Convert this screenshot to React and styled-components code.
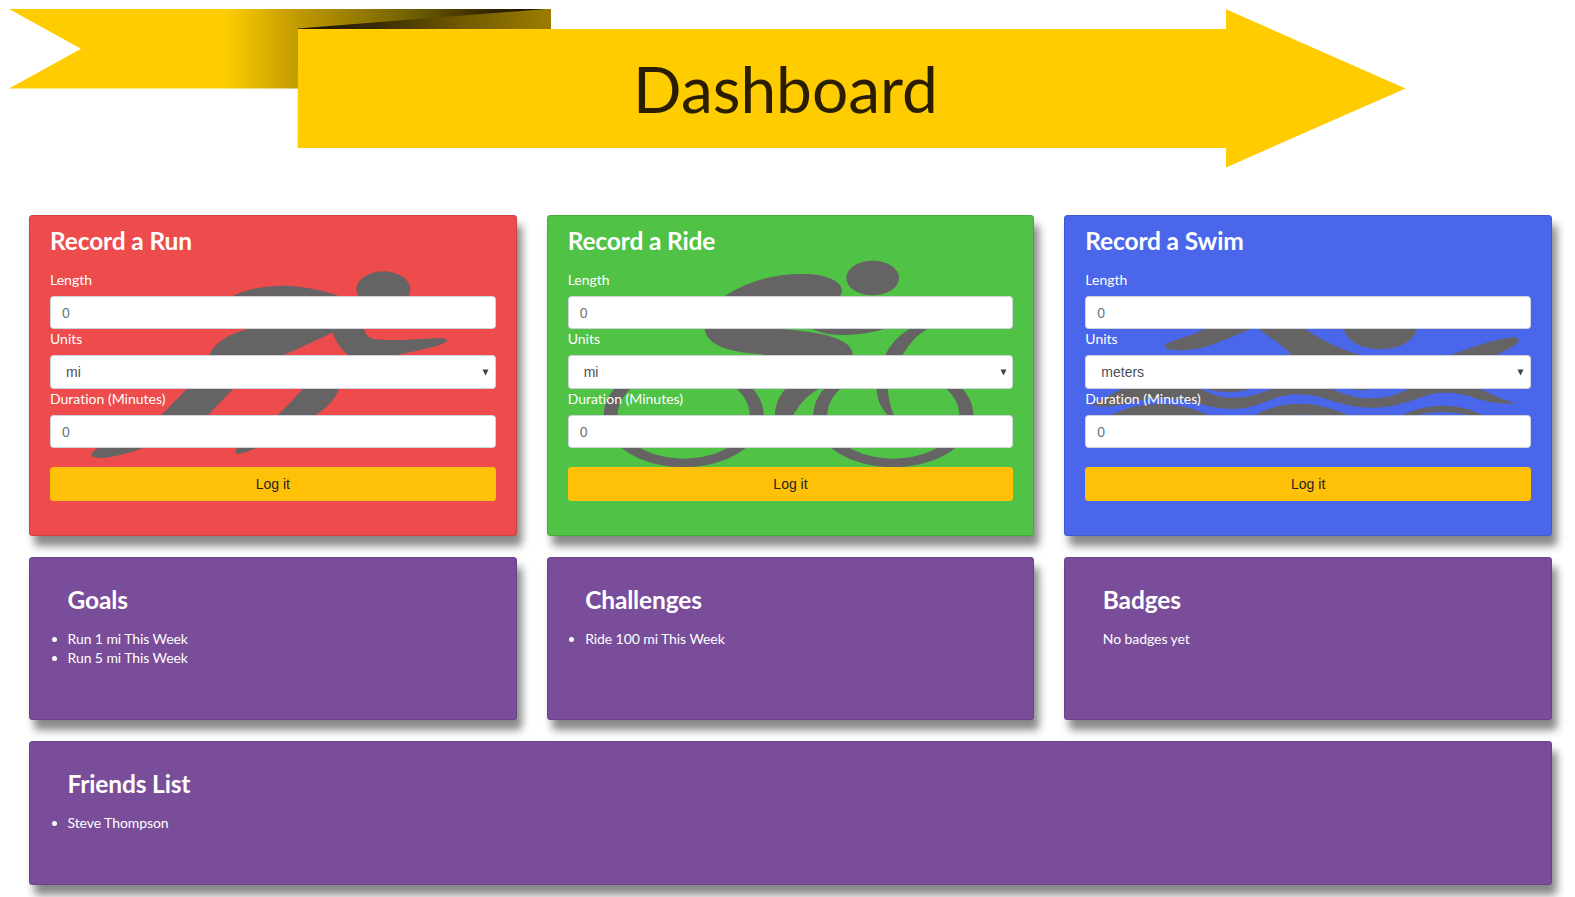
import React from "react";
import styled, { createGlobalStyle } from "styled-components";

const GlobalStyle = createGlobalStyle`
  *, *::before, *::after { box-sizing: border-box; }
  html { font-size: 14px; }
  body {
    margin: 0;
    background: #fff;
    font-family: Lato, "Liberation Sans", sans-serif;
    font-size: 14px;
    line-height: 19px;
    font-variant-ligatures: none;
    color: #fff;
    overflow: hidden;
  }
`;

const Page = styled.div`
  display: flex;
  flex-direction: column;
  height: 897px;
  overflow: hidden;
`;

const Banner = styled.header`
  display: grid;
  height: 215px;
  flex: none;
  > * { grid-area: 1 / 1; }
`;

const BannerArt = styled.svg`
  display: block;
  width: 1575px;
  height: 215px;
`;

const Title = styled.h1`
  margin: 0;
  padding: 50px 4px 0 0;
  z-index: 1;
  text-align: center;
  font-size: 64px;
  line-height: 77px;
  font-weight: 400;
  color: #2b1d00;
`;

const Panels = styled.main`
  display: grid;
  grid-template-columns: repeat(3, 1fr);
  grid-template-rows: 321px 163px 144px;
  column-gap: 30px;
  row-gap: 21px;
  padding: 0 23px 0 29px;
`;

const Card = styled.section`
  display: grid;
  min-width: 0;
  background: ${(p) => p.$color};
  border: 1px solid rgba(0, 0, 0, 0.125);
  border-radius: 3.5px;
  box-shadow: 5px 10px 8px #888;
  grid-column: ${(p) => (p.$wide ? "1 / -1" : "auto")};
  > * { grid-area: 1 / 1; min-width: 0; }
`;

const Figure = styled.svg`
  display: block;
  width: calc(100% + 2px);
  height: 321px;
  margin: -1px;
  fill: #656363;
`;

const Form = styled.form`
  z-index: 1;
  display: flex;
  flex-direction: column;
  padding: 9px 20px 0;
`;

const Heading = styled.h2`
  margin: 0;
  font-size: 24.5px;
  line-height: 32px;
  font-weight: 700;
  letter-spacing: -0.15px;
`;

const Label = styled.label`
  height: 26px;
  margin-top: ${(p) => (p.$first ? 13 : 0)}px;
`;

const Input = styled.input`
  height: 33px;
  width: 100%;
  padding: 5px 11px;
  border: 1px solid #ced4da;
  border-radius: 3.5px;
  background: #fff;
  font: 14px/21px "Liberation Sans", Arial, sans-serif;
  &::placeholder { color: #6c757d; opacity: 1; }
`;

const SelectBox = styled.div`
  display: flex;
  align-items: center;
  justify-content: space-between;
  height: 34px;
  padding: 0 5.5px 0 15px;
  border: 1px solid #ced4da;
  border-radius: 3.5px;
  background: #fff;
  color: #495057;
  font: 14px/21px "Liberation Sans", Arial, sans-serif;
`;

const Caret = styled.svg`
  width: 7px;
  height: 7px;
  fill: #3d4247;
`;

const Button = styled.button`
  height: 34px;
  margin-top: 19px;
  padding: 0;
  border: 0;
  border-radius: 3.5px;
  background: #ffc107;
  color: #212529;
  font: 14px/21px "Liberation Sans", Arial, sans-serif;
`;

const InfoBody = styled.div`
  padding: 26px 38px 0 37.5px;
  letter-spacing: -0.08px;
`;

const List = styled.ul`
  margin: 13px 0 0;
  padding: 0;
`;

const Note = styled.p`
  margin: 13px 0 0;
`;

function Ribbon() {
  return (
    <BannerArt viewBox="0 0 1575 215" aria-hidden="true">
      <defs>
        <linearGradient id="tail" gradientUnits="userSpaceOnUse" x1="225" y1="0" x2="535" y2="0">
          <stop offset="0" stopColor="#ffcc00" />
          <stop offset="0.24" stopColor="#bf9900" />
          <stop offset="0.6" stopColor="#706000" />
          <stop offset="0.82" stopColor="#3a2c00" />
          <stop offset="1" stopColor="#1b1200" />
        </linearGradient>
        <linearGradient id="fold" gradientUnits="userSpaceOnUse" x1="298" y1="0" x2="551" y2="0">
          <stop offset="0" stopColor="#1b1200" />
          <stop offset="0.3" stopColor="#382b00" />
          <stop offset="0.65" stopColor="#725a00" />
          <stop offset="1" stopColor="#9c7d00" />
        </linearGradient>
      </defs>
      <path d="M9 9H551V29H298V88.4H9L81 48.7Z" fill="url(#tail)" />
      <path d="M298 28.5L545 9H551V29.5H298Z" fill="url(#fold)" />
      <path d="M298 29H1226V9.3L1405.5 88.4L1226 167.5V148H297.6Z" fill="#ffcc00" />
    </BannerArt>
  );
}

function Runner() {
  return (
    <Figure viewBox="27 30 1464 963" preserveAspectRatio="none" aria-hidden="true">
      <ellipse cx="1091" cy="253" rx="81" ry="54" />
      <path d="M690 371C620 387 585 415 568 450C545 490 530 520 500 552L425 630C370 675 315 705 235 728C205 745 210 760 240 759C280 757 325 745 372 728C460 700 530 660 565 630L640 552C680 505 735 480 790 450C850 425 900 400 938 383C950 412 965 435 985 450C1030 468 1090 460 1130 450C1190 438 1282 420 1282 405C1275 398 1250 400 1200 402C1150 406 1090 406 1060 402C1040 395 1035 380 1033 371L955 272C880 246 820 242 780 242C720 244 680 255 640 272Z" />
      <path d="M848 552H957C950 580 920 610 887 630C820 690 770 710 710 728C680 742 655 750 648 744C645 735 650 730 655 728C700 700 740 660 773 630C800 605 830 575 848 552Z" />
      <path d="M700 455L957 552H848L600 455Z" />
    </Figure>
  );
}

function Cyclist() {
  return (
    <Figure viewBox="20 30 1463 963" preserveAspectRatio="none" aria-hidden="true">
      <ellipse cx="997" cy="219" rx="79" ry="52" />
      <path d="M550 275C620 230 700 206 790 207C860 207 905 230 905 258Q904 268 898 275V300H550Z" />
      <path d="M492 365C495 415 550 440 665 448L700 470H930L937 450C938 402 850 381 715 371V360H492Z" />
      <path d="M815 371C860 397 955 395 1035 371V360H815Z" />
      <path d="M1108 371H1162C1125 392 1105 420 1087 450C1040 490 1038 530 1042 552C1045 580 1050 608 1062 634H1046C1020 610 1010 580 1009 552C1010 515 1015 485 1035 450C1052 415 1075 392 1108 371Z" />
      <path d="M735 552H835C800 570 775 600 757 635H703C705 600 715 575 735 552Z" />
      <path
        fillRule="evenodd"
        d="M190 630A240 157 0 0 1 670 630A240 157 0 0 1 190 630ZM232 630A198 131 0 0 0 628 630A198 131 0 0 0 232 630Z"
      />
      <path
        fillRule="evenodd"
        d="M819 630A240 157 0 0 1 1299 630A240 157 0 0 1 819 630ZM861 630A198 131 0 0 0 1257 630A198 131 0 0 0 861 630Z"
      />
    </Figure>
  );
}

function Swimmer() {
  return (
    <Figure viewBox="28 30 1463 963" preserveAspectRatio="none" aria-hidden="true">
      <path d="M460 365L450 371C400 400 328 408 330 425C345 440 400 437 440 429C490 415 540 392 590 371L600 369L612 372L705 440V460H950L920 450C860 435 800 405 750 371V365Z" />
      <ellipse cx="977" cy="365" rx="110" ry="68" />
      <path d="M1180 452C1250 430 1320 400 1380 397C1400 400 1395 415 1370 426C1350 440 1330 446 1320 452Z" />
      <path d="M448 550H592C560 565 490 565 448 550Z" />
      <path d="M880 550H960C935 558 905 558 880 550Z" />
      <path d="M110 600C145 585 175 560 215 548H430C465 564 490 578 530 578C590 578 625 562 665 548H820C870 568 900 580 950 580C1010 580 1035 562 1075 548H1265C1310 565 1340 585 1385 594C1330 600 1285 588 1245 574C1215 565 1190 563 1165 563C1100 564 1055 608 950 608C850 608 815 568 730 568C650 568 620 612 530 612C455 610 400 580 315 580C240 580 180 618 110 600Z" />
      <path d="M165 632C215 606 265 597 315 597C370 598 420 610 465 632Z" />
      <path fillRule="evenodd" d="M598 632C645 605 690 596 740 596C790 597 840 612 885 632ZM720 632Q748 625 775 632Z" />
      <path d="M1038 632C1080 612 1120 602 1165 602C1215 602 1250 614 1290 632H1250C1190 617 1130 617 1085 632Z" />
    </Figure>
  );
}

function RecordCard({ color, title, unit, children }) {
  return (
    <Card $color={color}>
      {children}
      <Form>
        <Heading>{title}</Heading>
        <Label $first>Length</Label>
        <Input placeholder="0" />
        <Label>Units</Label>
        <SelectBox role="combobox">
          {unit}
          <Caret viewBox="0 0 7 7"><path d="M0.5 0.5H6.5L3.5 6.5Z" /></Caret>
        </SelectBox>
        <Label>Duration (Minutes)</Label>
        <Input placeholder="0" />
        <Button type="button">Log it</Button>
      </Form>
    </Card>
  );
}

function InfoCard({ title, items, note, wide }) {
  return (
    <Card $color="#794d99" $wide={wide}>
      <InfoBody>
        <Heading>{title}</Heading>
        {items && <List>{items.map((item) => <li key={item}>{item}</li>)}</List>}
        {note && <Note>{note}</Note>}
      </InfoBody>
    </Card>
  );
}

export default function App() {
  return (
    <>
      <GlobalStyle />
      <Page>
        <Banner>
          <Ribbon />
          <Title>Dashboard</Title>
        </Banner>
        <Panels>
          <RecordCard color="#ed4b4c" title="Record a Run" unit="mi"><Runner /></RecordCard>
          <RecordCard color="#50c246" title="Record a Ride" unit="mi"><Cyclist /></RecordCard>
          <RecordCard color="#4a67eb" title="Record a Swim" unit="meters"><Swimmer /></RecordCard>
          <InfoCard title="Goals" items={["Run 1 mi This Week", "Run 5 mi This Week"]} />
          <InfoCard title="Challenges" items={["Ride 100 mi This Week"]} />
          <InfoCard title="Badges" note="No badges yet" />
          <InfoCard title="Friends List" items={["Steve Thompson"]} wide />
        </Panels>
      </Page>
    </>
  );
}
